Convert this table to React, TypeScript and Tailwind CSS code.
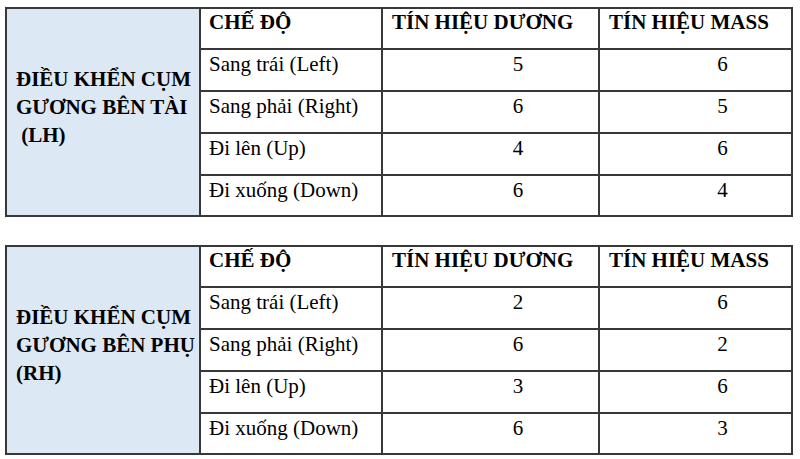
import React from "react";

type Row = { mode: string; pos: string; mass: string };

const rowsLH: Row[] = [
  { mode: "Sang trái (Left)", pos: "5", mass: "6" },
  { mode: "Sang phải (Right)", pos: "6", mass: "5" },
  { mode: "Đi lên (Up)", pos: "4", mass: "6" },
  { mode: "Đi xuống (Down)", pos: "6", mass: "4" },
];

const rowsRH: Row[] = [
  { mode: "Sang trái (Left)", pos: "2", mass: "6" },
  { mode: "Sang phải (Right)", pos: "6", mass: "2" },
  { mode: "Đi lên (Up)", pos: "3", mass: "6" },
  { mode: "Đi xuống (Down)", pos: "6", mass: "3" },
];

const rowHeights = ["h-[42px]", "h-[42px]", "h-[42px]", "h-[41px]"];

function MirrorTable({ lines, rows }: { lines: string[]; rows: Row[] }) {
  const b = "border-r-2 border-b-2 border-[#383838]";
  return (
    <div className="w-[788px] border-l-2 border-t-2 border-[#383838] grid grid-cols-[194px_182px_217px_193px] grid-rows-[41px_42px_42px_42px_41px]">
      <div
        className={`${b} row-span-5 bg-[#dce8f4] pt-[56px] pl-[9px] font-bold leading-[28px] whitespace-pre`}
      >
        {lines.map((l, i) => (
          <div key={i}>{l}</div>
        ))}
      </div>
      <div className={`${b} pt-[1px] pl-[8px] font-bold leading-[24px] whitespace-nowrap`}>CHẾ ĐỘ</div>
      <div className={`${b} pt-[1px] pl-[9px] font-bold leading-[24px] whitespace-nowrap`}>TÍN HIỆU DƯƠNG</div>
      <div className={`${b} pt-[1px] pl-[9px] font-bold leading-[24px] whitespace-nowrap`}>TÍN HIỆU MASS</div>
      {rows.map((r, i) => (
        <React.Fragment key={i}>
          <div className={`${b} ${rowHeights[i]} pt-[2px] pl-[8px] leading-[24px] whitespace-nowrap`}>{r.mode}</div>
          <div className={`${b} ${rowHeights[i]} pt-[2px] pl-[55px] text-center leading-[24px]`}>{r.pos}</div>
          <div className={`${b} ${rowHeights[i]} pt-[2px] pl-[54px] text-center leading-[24px]`}>{r.mass}</div>
        </React.Fragment>
      ))}
    </div>
  );
}

export default function App() {
  return (
    <div className="w-[800px] h-[459px] bg-white pt-[7px] pl-[5px] overflow-hidden text-[21px] text-black font-['Liberation_Serif']">
      <div className="flex flex-col gap-[28px]">
        <MirrorTable lines={["ĐIỀU KHỂN CỤM", "GƯƠNG BÊN TÀI", " (LH)"]} rows={rowsLH} />
        <MirrorTable lines={["ĐIỀU KHỂN CỤM", "GƯƠNG BÊN PHỤ", "(RH)"]} rows={rowsRH} />
      </div>
    </div>
  );
}
